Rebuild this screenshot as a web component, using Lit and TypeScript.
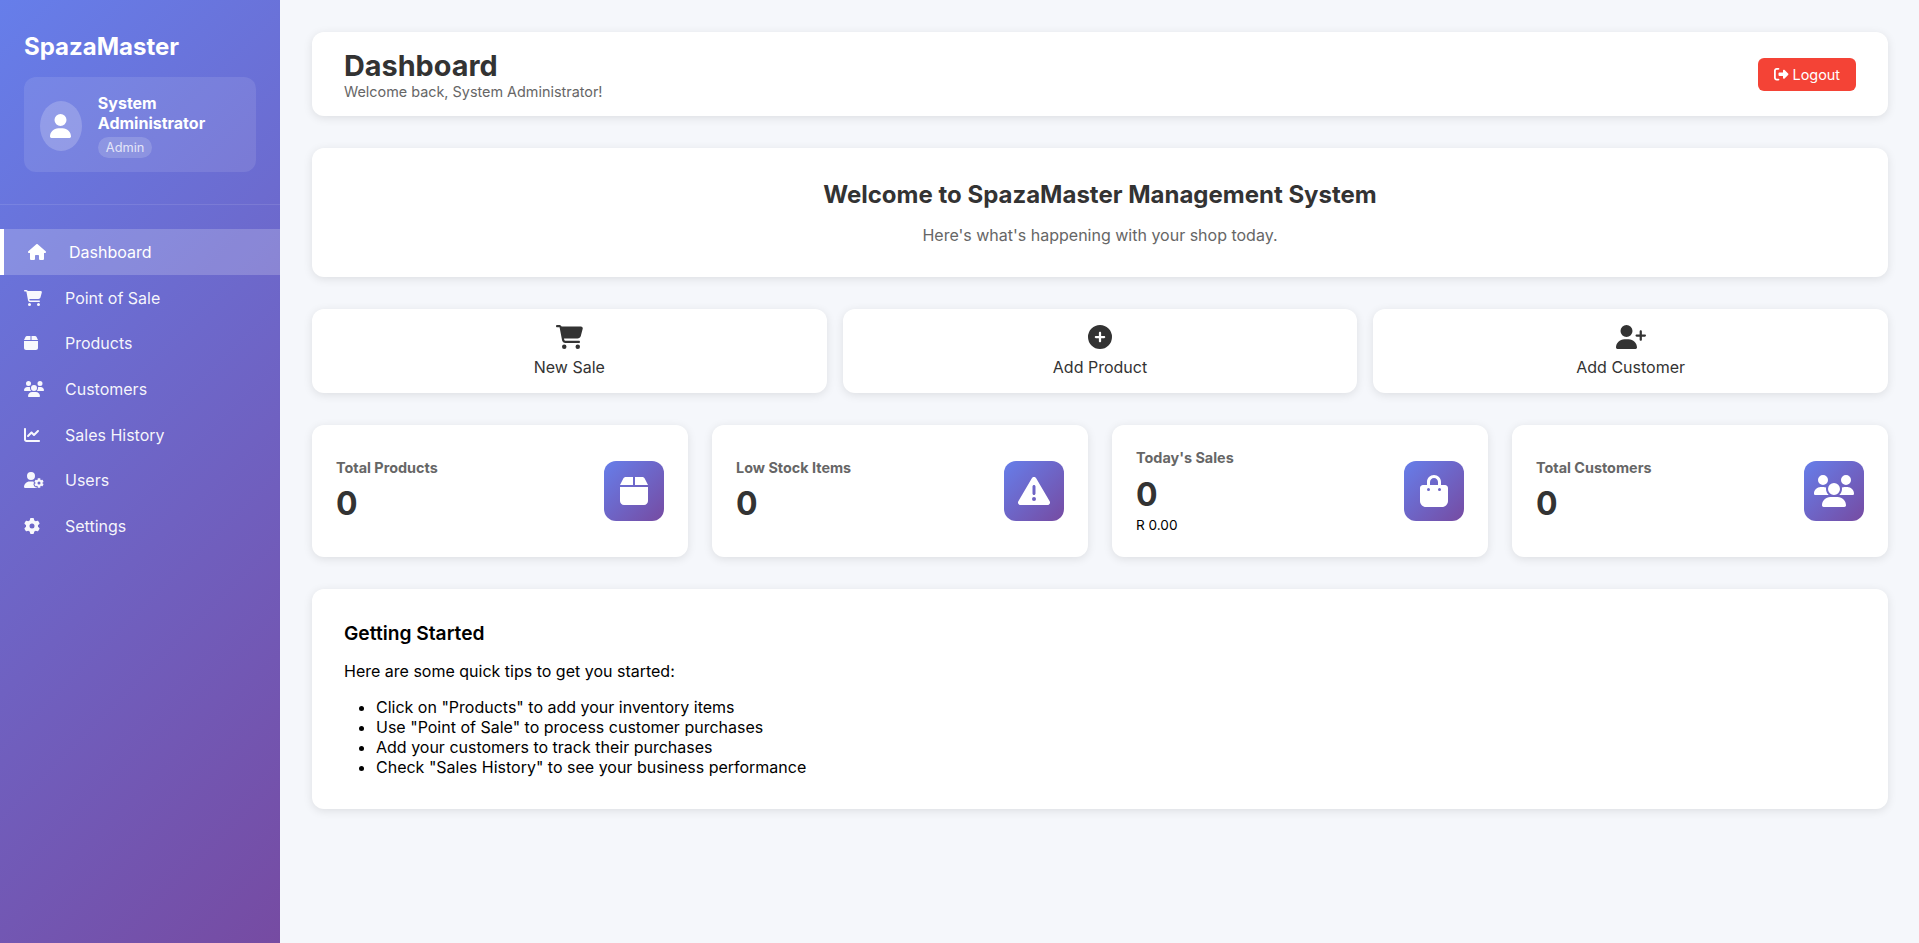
import { LitElement, css, html } from "lit";
import { customElement } from "lit/decorators.js";

// font awesome 6 solid shapes, [viewBox width, path]
const ICONS: Record<string, [number, string]> = {
  user: [448, "M224 256A128 128 0 1 0 224 0a128 128 0 1 0 0 256zm-45.7 48C79.8 304 0 383.8 0 482.3C0 498.7 13.3 512 29.7 512H418.3c16.4 0 29.7-13.3 29.7-29.7C448 383.8 368.2 304 269.7 304H178.3z"],
  house: [576, "M575.8 255.5c0 18-15 32.1-32 32.1h-32l.7 160.2c0 2.7-.2 5.4-.5 8.1V472c0 22.1-17.9 40-40 40H456c-1.1 0-2.2 0-3.3-.1c-1.4 .1-2.8 .1-4.2 .1H416 392c-22.1 0-40-17.9-40-40V448 384c0-17.7-14.3-32-32-32H256c-17.7 0-32 14.3-32 32v64 24c0 22.1-17.9 40-40 40H160 128.1c-1.5 0-3-.1-4.5-.2c-1.2 .1-2.4 .2-3.6 .2H104c-22.1 0-40-17.9-40-40V360c0-.9 0-1.9 .1-2.8V287.6H32c-18 0-32-14-32-32.1c0-9 3-17 10-24L266.4 8c7-7 15-8 22-8s15 2 21 7L564.8 231.5c8 7 12 15 11 24z"],
  cart: [576, "M0 24C0 10.7 10.7 0 24 0H69.5c22 0 41.5 12.8 50.6 32h411c26.3 0 45.5 25 38.6 50.4l-41 152.3c-8.5 31.4-37 53.3-69.5 53.3H170.7l5.4 28.5c2.2 11.3 12.1 19.5 23.6 19.5H488c13.3 0 24 10.7 24 24s-10.7 24-24 24H199.7c-34.6 0-64.3-24.6-70.7-58.5L77.4 54.5c-.7-3.8-4-6.5-7.9-6.5H24C10.7 48 0 37.3 0 24zM128 464a48 48 0 1 1 96 0 48 48 0 1 1 -96 0zm336-48a48 48 0 1 1 0 96 48 48 0 1 1 0-96z"],
  box: [448, "M50.7 58.5L0 160H208V32H93.7C75.5 32 58.9 42.3 50.7 58.5zM240 160H448L397.3 58.5C389.1 42.3 372.5 32 354.3 32H240V160zm208 32H0V416c0 35.3 28.7 64 64 64H384c35.3 0 64-28.7 64-64V192z"],
  users: [640, "M144 0a80 80 0 1 1 0 160A80 80 0 1 1 144 0zM512 0a80 80 0 1 1 0 160A80 80 0 1 1 512 0zM0 298.7C0 239.8 47.8 192 106.7 192h42.7c15.9 0 31 3.5 44.6 9.7c-1.3 7.2-1.9 14.7-1.9 22.3c0 38.2 16.8 72.5 43.3 96c-.2 0-.4 0-.7 0H21.3C9.6 320 0 310.4 0 298.7zM405.3 320c-.2 0-.4 0-.7 0c26.6-23.5 43.3-57.8 43.3-96c0-7.6-.7-15-1.9-22.3c13.6-6.3 28.7-9.7 44.6-9.7h42.7C592.2 192 640 239.8 640 298.7c0 11.8-9.6 21.3-21.3 21.3H405.3zM224 224a96 96 0 1 1 192 0 96 96 0 1 1 -192 0zM128 485.3C128 411.7 187.7 352 261.3 352H378.7C452.3 352 512 411.7 512 485.3c0 14.7-11.9 26.7-26.7 26.7H154.7c-14.7 0-26.7-11.9-26.7-26.7z"],
  chart: [512, "M64 64c0-17.7-14.3-32-32-32S0 46.3 0 64V400c0 44.2 35.8 80 80 80H480c17.7 0 32-14.3 32-32s-14.3-32-32-32H80c-8.8 0-16-7.2-16-16V64zm406.6 86.6c12.5-12.5 12.5-32.8 0-45.3s-32.8-12.5-45.3 0L320 210.7l-57.4-57.4c-12.5-12.5-32.8-12.5-45.3 0l-112 112c-12.5 12.5-12.5 32.8 0 45.3s32.8 12.5 45.3 0L240 221.3l57.4 57.4c12.5 12.5 32.8 12.5 45.3 0l128-128z"],
  userGear: [640, "M224 0a128 128 0 1 1 0 256A128 128 0 1 1 224 0zM178.3 304h91.4c11.8 0 23.4 1.2 34.5 3.3c-2.1 18.5 7.4 35.6 21.8 44.8c-16.6 10.6-26.7 31.6-20 53.3c4 12.9 9.4 25.5 16.4 37.6s15.2 23.1 24.4 33c15.7 16.9 39.6 18.4 57.2 8.7v.9c0 9.2 2.7 18.5 7.9 26.3H29.7C13.3 512 0 498.7 0 482.3C0 383.8 79.8 304 178.3 304zM436 218.2c0-7 4.5-13.3 11.3-14.8c10.5-2.4 21.5-3.7 32.7-3.7s22.2 1.3 32.7 3.7c6.8 1.5 11.3 7.8 11.3 14.8v30.6c7.9 3.4 15.4 7.7 22.3 12.8l24.9-14.3c6.1-3.5 13.7-2.7 18.5 2.4c7.6 8.1 14.3 17.2 20.1 27.2s10.3 20.4 13.5 31c2.1 6.7-1.1 13.7-7.2 17.2l-25 14.4c.4 4 .7 8.1 .7 12.3s-.2 8.2-.7 12.3l25 14.4c6.1 3.5 9.2 10.5 7.2 17.2c-3.3 10.6-7.8 21-13.5 31s-12.5 19.1-20.1 27.2c-4.8 5.1-12.5 5.9-18.5 2.4l-24.9-14.3c-6.9 5.1-14.3 9.4-22.3 12.8l0 30.6c0 7-4.5 13.3-11.3 14.8c-10.5 2.4-21.5 3.7-32.7 3.7s-22.2-1.3-32.7-3.7c-6.8-1.5-11.3-7.8-11.3-14.8V454.8c-8-3.4-15.6-7.7-22.5-12.9l-24.7 14.3c-6.1 3.5-13.7 2.7-18.5-2.4c-7.6-8.1-14.3-17.2-20.1-27.2s-10.3-20.4-13.5-31c-2.1-6.7 1.1-13.7 7.2-17.2l24.8-14.3c-.4-4.1-.7-8.2-.7-12.4s.2-8.3 .7-12.4L343.8 325c-6.1-3.5-9.2-10.5-7.2-17.2c3.3-10.6 7.7-21 13.5-31s12.5-19.1 20.1-27.2c4.8-5.1 12.4-5.9 18.5-2.4l24.8 14.3c6.9-5.1 14.5-9.4 22.5-12.9V218.2zm92.1 133.5a48.1 48.1 0 1 0 -96.1 0 48.1 48.1 0 1 0 96.1 0z"],
  gear: [512, "M495.9 166.6c3.2 8.7 .5 18.4-6.4 24.6l-43.3 39.4c1.1 8.3 1.7 16.8 1.7 25.4s-.6 17.1-1.7 25.4l43.3 39.4c6.9 6.2 9.6 15.9 6.4 24.6c-4.4 11.9-9.7 23.3-15.8 34.3l-4.7 8.1c-6.6 11-14 21.4-22.1 31.2c-5.9 7.2-15.7 9.6-24.5 6.8l-55.7-17.7c-13.4 10.3-28.2 18.9-44 25.4l-12.5 57.1c-2 9.1-9 16.3-18.2 17.8c-13.8 2.3-28 3.5-42.5 3.5s-28.7-1.2-42.5-3.5c-9.2-1.5-16.2-8.7-18.2-17.8l-12.5-57.1c-15.8-6.5-30.6-15.1-44-25.4L83.1 425.9c-8.8 2.8-18.6 .3-24.5-6.8c-8.1-9.8-15.5-20.2-22.1-31.2l-4.7-8.1c-6.1-11-11.4-22.4-15.8-34.3c-3.2-8.7-.5-18.4 6.4-24.6l43.3-39.4C64.6 273.1 64 264.6 64 256s.6-17.1 1.7-25.4L22.4 191.2c-6.9-6.2-9.6-15.9-6.4-24.6c4.4-11.9 9.7-23.3 15.8-34.3l4.7-8.1c6.6-11 14-21.4 22.1-31.2c5.9-7.2 15.7-9.6 24.5-6.8l55.7 17.7c13.4-10.3 28.2-18.9 44-25.4l12.5-57.1c2-9.1 9-16.3 18.2-17.8C227.3 1.2 241.5 0 256 0s28.7 1.2 42.5 3.5c9.2 1.5 16.2 8.7 18.2 17.8l12.5 57.1c15.8 6.5 30.6 15.1 44 25.4l55.7-17.7c8.8-2.8 18.6-.3 24.5 6.8c8.1 9.8 15.5 20.2 22.1 31.2l4.7 8.1c6.1 11 11.4 22.4 15.8 34.3zM256 336a80 80 0 1 0 0-160 80 80 0 1 0 0 160z"],
  logout: [512, "M377.9 105.9L500.7 228.7c7.2 7.2 11.3 17.1 11.3 27.3s-4.1 20.1-11.3 27.3L377.9 406.1c-6.4 6.4-15 9.9-24 9.9c-18.7 0-33.9-15.2-33.9-33.9l0-62.1-128 0c-17.7 0-32-14.3-32-32l0-64c0-17.7 14.3-32 32-32l128 0 0-62.1c0-18.7 15.2-33.9 33.9-33.9c9 0 17.6 3.6 24 9.9zM160 96L96 96c-17.7 0-32 14.3-32 32l0 256c0 17.7 14.3 32 32 32l64 0c17.7 0 32 14.3 32 32s-14.3 32-32 32l-64 0c-53 0-96-43-96-96L0 128C0 75 43 32 96 32l64 0c17.7 0 32 14.3 32 32s-14.3 32-32 32z"],
  plus: [512, "M256 512A256 256 0 1 0 256 0a256 256 0 1 0 0 512zM232 344V280H168c-13.3 0-24-10.7-24-24s10.7-24 24-24h64V168c0-13.3 10.7-24 24-24s24 10.7 24 24v64h64c13.3 0 24 10.7 24 24s-10.7 24-24 24H280v64c0 13.3-10.7 24-24 24s-24-10.7-24-24z"],
  userPlus: [640, "M96 128a128 128 0 1 1 256 0A128 128 0 1 1 96 128zM0 482.3C0 383.8 79.8 304 178.3 304h91.4C368.2 304 448 383.8 448 482.3c0 16.4-13.3 29.7-29.7 29.7H29.7C13.3 512 0 498.7 0 482.3zM504 312V248H440c-13.3 0-24-10.7-24-24s10.7-24 24-24h64V136c0-13.3 10.7-24 24-24s24 10.7 24 24v64h64c13.3 0 24 10.7 24 24s-10.7 24-24 24H552v64c0 13.3-10.7 24-24 24s-24-10.7-24-24z"],
  warning: [512, "M256 32c14.2 0 27.3 7.5 34.5 19.8l216 368c7.3 12.4 7.3 27.7 .2 40.1S486.3 480 472 480H40c-14.3 0-27.6-7.7-34.7-20.1s-7-27.8 .2-40.1l216-368C228.7 39.5 241.8 32 256 32zm0 128c-13.3 0-24 10.7-24 24V296c0 13.3 10.7 24 24 24s24-10.7 24-24V184c0-13.3-10.7-24-24-24zm32 224a32 32 0 1 0 -64 0 32 32 0 1 0 64 0z"],
  bag: [448, "M160 112c0-35.3 28.7-64 64-64s64 28.7 64 64v48H160V112zm-48 48H48c-26.5 0-48 21.5-48 48V416c0 53 43 96 96 96H352c53 0 96-43 96-96V208c0-26.5-21.5-48-48-48H336V112C336 50.1 285.9 0 224 0S112 50.1 112 112v48zm24 48a24 24 0 1 1 0 48 24 24 0 1 1 0-48zm152 24a24 24 0 1 1 48 0 24 24 0 1 1 -48 0z"],
};

const icon = (name: string) => {
  const [w, d] = ICONS[name];
  return html`<svg class="icon" viewBox="0 0 ${w} 512" aria-hidden="true"><path d=${d}></path></svg>`;
};

const NAV = [
  { label: "Dashboard", icon: "house", active: true },
  { label: "Point of Sale", icon: "cart" },
  { label: "Products", icon: "box" },
  { label: "Customers", icon: "users" },
  { label: "Sales History", icon: "chart" },
  { label: "Users", icon: "userGear" },
  { label: "Settings", icon: "gear" },
];

const ACTIONS = [
  { label: "New Sale", icon: "cart" },
  { label: "Add Product", icon: "plus" },
  { label: "Add Customer", icon: "userPlus" },
];

const STATS = [
  { title: "Total Products", value: "0", icon: "box" },
  { title: "Low Stock Items", value: "0", icon: "warning" },
  { title: "Today's Sales", value: "0", sub: "R 0.00", icon: "bag" },
  { title: "Total Customers", value: "0", icon: "users" },
];

const TIPS = [
  `Click on "Products" to add your inventory items`,
  `Use "Point of Sale" to process customer purchases`,
  `Add your customers to track their purchases`,
  `Check "Sales History" to see your business performance`,
];

@customElement("app-root")
export class AppRoot extends LitElement {
  static styles = css`
    :host {
      display: flex;
      min-height: 100vh;
      background: #f5f7fb;
      font-family: Inter, "Liberation Sans", sans-serif;
      font-size: 16px;
      color: #000;
    }
    h1, h2, h3, p, ul {
      margin: 0;
    }
    .icon {
      display: block;
      flex: none;
      height: 1em;
      fill: currentColor;
    }

    .sidebar {
      flex: 0 0 280px;
      background: linear-gradient(135deg, #667eea 0%, #764ba2 100%);
      color: #fff;
    }
    .brand {
      padding: 32px 24px;
      border-bottom: 1px solid rgba(255, 255, 255, 0.1);
    }
    .brand h2 {
      font-size: 24px;
      font-weight: 700;
      margin-bottom: 16px;
    }
    .user-box {
      display: flex;
      align-items: center;
      gap: 16px;
      padding: 16px 16px 14px;
      background: rgba(255, 255, 255, 0.1);
      border-radius: 12px;
    }
    .avatar {
      width: 50px;
      height: 50px;
      border-radius: 50%;
      background: rgba(255, 255, 255, 0.2);
      display: flex;
      align-items: center;
      justify-content: center;
      font-size: 24px;
    }
    .user-name {
      font-weight: 700;
    }
    .badge {
      display: inline-block;
      margin-top: 4px;
      padding: 3px 8px;
      font-size: 12.8px;
      background: rgba(255, 255, 255, 0.2);
      border-radius: 12px;
      opacity: 0.8;
      vertical-align: top;
    }
    .nav {
      padding-top: 24.3px;
    }
    .nav-item {
      display: flex;
      align-items: center;
      padding: 12.84px 24px;
      color: rgba(255, 255, 255, 0.95);
    }
    .nav-item.active {
      background: rgba(255, 255, 255, 0.2);
      border-left: 4px solid #fff;
      color: #fff;
    }
    .nav-icon {
      flex: 0 0 41px;
    }

    .main {
      flex: 1;
      min-width: 0;
      padding: 32px 31px 32px 32px;
      display: flex;
      flex-direction: column;
      gap: 32px;
    }
    .card {
      background: #fff;
      border-radius: 12px;
      box-shadow: 0 2px 10px rgba(0, 0, 0, 0.1);
    }

    .topbar {
      display: flex;
      align-items: center;
      justify-content: space-between;
      padding: 16px 32px;
    }
    .topbar h1 {
      font-size: 28.8px;
      font-weight: 700;
      color: #333;
    }
    .topbar p {
      font-size: 14.4px;
      color: #666;
    }
    .logout {
      display: flex;
      align-items: center;
      gap: 4px;
      padding: 8px 16px;
      border: none;
      border-radius: 6px;
      background: #f44336;
      color: #fff;
      font: inherit;
      font-size: 14.4px;
    }

    .welcome {
      padding: 32px;
      text-align: center;
    }
    .welcome h2 {
      font-size: 24px;
      font-weight: 700;
      color: #333;
      margin-bottom: 16px;
    }
    .welcome p {
      color: #666;
    }

    .actions {
      display: grid;
      grid-template-columns: repeat(3, 1fr);
      gap: 16px;
    }
    .action {
      display: flex;
      flex-direction: column;
      align-items: center;
      gap: 8.3px;
      padding: 16px;
      color: #333;
    }
    .action .icon {
      font-size: 24px;
    }

    .stats {
      display: grid;
      grid-template-columns: repeat(4, 1fr);
      gap: 24px;
    }
    .stat {
      display: flex;
      align-items: center;
      justify-content: space-between;
      padding: 24px;
    }
    .stat-title {
      font-size: 14.4px;
      font-weight: 700;
      color: #666;
      margin-bottom: 8.5px;
    }
    .stat-value {
      font-size: 32px;
      font-weight: 700;
      color: #333;
    }
    .stat-sub {
      font-size: 13.6px;
      margin-top: 2.9px;
    }
    .stat-icon {
      width: 60px;
      height: 60px;
      border-radius: 12px;
      background: linear-gradient(135deg, #667eea 0%, #764ba2 100%);
      color: #fff;
      display: flex;
      align-items: center;
      justify-content: center;
      font-size: 32px;
    }

    .tips {
      padding: 32px;
    }
    .tips h3 {
      font-size: 19.2px;
      font-weight: 600;
      margin-bottom: 16px;
    }
    .tips ul {
      margin-top: 16px;
      padding-left: 32px;
    }
  `;

  render() {
    return html`
      <aside class="sidebar">
        <div class="brand">
          <h2>SpazaMaster</h2>
          <div class="user-box">
            <div class="avatar">${icon("user")}</div>
            <div>
              <div class="user-name">System Administrator</div>
              <span class="badge">Admin</span>
            </div>
          </div>
        </div>
        <nav class="nav">
          ${NAV.map(
            (item) => html`
              <div class="nav-item ${item.active ? "active" : ""}">
                <span class="nav-icon">${icon(item.icon)}</span>
                <span>${item.label}</span>
              </div>
            `
          )}
        </nav>
      </aside>
      <main class="main">
        <header class="card topbar">
          <div>
            <h1>Dashboard</h1>
            <p>Welcome back, System Administrator!</p>
          </div>
          <button class="logout">${icon("logout")}<span>Logout</span></button>
        </header>
        <section class="card welcome">
          <h2>Welcome to SpazaMaster Management System</h2>
          <p>Here's what's happening with your shop today.</p>
        </section>
        <section class="actions">
          ${ACTIONS.map(
            (a) => html`<div class="card action">${icon(a.icon)}<span>${a.label}</span></div>`
          )}
        </section>
        <section class="stats">
          ${STATS.map(
            (s) => html`
              <div class="card stat">
                <div>
                  <div class="stat-title">${s.title}</div>
                  <div class="stat-value">${s.value}</div>
                  ${s.sub ? html`<div class="stat-sub">${s.sub}</div>` : ""}
                </div>
                <div class="stat-icon">${icon(s.icon)}</div>
              </div>
            `
          )}
        </section>
        <section class="card tips">
          <h3>Getting Started</h3>
          <p>Here are some quick tips to get you started:</p>
          <ul>
            ${TIPS.map((t) => html`<li>${t}</li>`)}
          </ul>
        </section>
      </main>
    `;
  }
}
